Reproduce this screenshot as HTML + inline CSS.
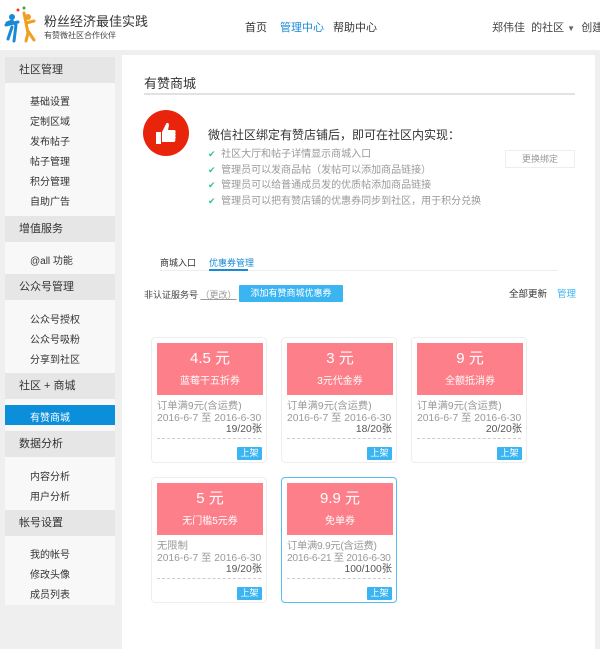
<!DOCTYPE html>
<html><head><meta charset="utf-8"><style>
*{margin:0;padding:0;box-sizing:border-box}
body{width:600px;height:649px;overflow:hidden;background:#efefef;font-family:"Liberation Sans","Noto Sans CJK SC",sans-serif;color:#333;position:relative}
.a{position:absolute;white-space:nowrap}
.hdr{position:absolute;left:0;top:0;width:600px;height:50px;background:#fff}
.side{position:absolute;left:5px;top:57px;width:110px;height:548px;background:#f8f8f8}
.sh{position:absolute;left:5px;width:110px;height:26px;background:#e6e6e6;font-size:11px;line-height:26px;padding-left:14px;color:#333}
.si{position:absolute;left:30px;font-size:10px;color:#333}
.main{position:absolute;left:122px;top:55px;width:473px;height:594px;background:#fff}
.card{position:absolute;width:116px;height:126px;border:1px solid #eee;border-radius:4px;background:#fff}
.card.sel{border:1.5px solid #5bbcf2}
.pk{position:absolute;left:5px;top:5px;width:106px;height:52px;background:#fd7f8a;color:#fff;text-align:center}
.pk b{display:block;font-weight:normal;font-size:15px;margin-top:7px;line-height:18px}
.pk i{display:block;font-style:normal;font-size:10px;margin-top:4px}
.ct{position:absolute;left:5px;font-size:10.3px;color:#999;line-height:12px;white-space:nowrap}
.cnt{position:absolute;right:4px;top:86px;font-size:10.3px;color:#555;line-height:12px;white-space:nowrap}
.dash{position:absolute;left:5px;right:5px;top:100px;border-top:1px dashed #ccc}
.up{position:absolute;right:4px;top:109px;width:25px;height:13px;background:#3bb4f2;color:#fff;font-size:9px;line-height:13px;text-align:center;border-radius:1px}
.chk{color:#2dc48a;font-size:9px}
</style></head><body>
<div class="hdr"></div>
<svg class="a" style="left:4px;top:5px" width="36" height="40" viewBox="0 0 36 40">
<circle cx="8" cy="12" r="3" fill="#1a8ad4"/><path d="M3 18 L8 16 L12 20 L10 36 M8 22 L4 34 M2 20 L14 17" stroke="#1a8ad4" stroke-width="3" fill="none" stroke-linecap="round"/>
<circle cx="24" cy="12" r="3" fill="#f0a020"/><path d="M20 8 L22 18 L24 28 L22 36 M24 26 L30 35 M22 18 L30 16" stroke="#f0a020" stroke-width="3" fill="none" stroke-linecap="round"/>
<circle cx="14" cy="5" r="1.5" fill="#e33"/><circle cx="20" cy="3" r="1.5" fill="#3a3"/>
</svg>
<div class="a" style="left:44px;top:11px;font-size:13px;color:#333">粉丝经济最佳实践</div>
<div class="a" style="left:44px;top:30px;font-size:8px;color:#444">有赞微社区合作伙伴</div>
<div class="a" style="left:245px;top:19px;font-size:11px;color:#333">首页</div>
<div class="a" style="left:280px;top:19px;font-size:11px;color:#1a8ad4">管理中心</div>
<div class="a" style="left:333px;top:19px;font-size:11px;color:#333">帮助中心</div>
<div class="a" style="left:492px;top:19px;font-size:11px;color:#444">郑伟佳 &nbsp;的社区 <span style="font-size:8px;color:#666">▼</span>&nbsp; 创建</div>

<div class="side"></div>
<div class="sh" style="top:57px">社区管理</div>
<div class="si" style="top:93px">基础设置</div><div class="si" style="top:113px">定制区域</div><div class="si" style="top:133px">发布帖子</div><div class="si" style="top:153px">帖子管理</div><div class="si" style="top:173px">积分管理</div><div class="si" style="top:193px">自助广告</div>
<div class="sh" style="top:216px">增值服务</div>
<div class="si" style="top:252px">@all 功能</div>
<div class="sh" style="top:274px">公众号管理</div>
<div class="si" style="top:311px">公众号授权</div><div class="si" style="top:331px">公众号吸粉</div><div class="si" style="top:351px">分享到社区</div>
<div class="sh" style="top:373px">社区 + 商城</div>
<div class="a" style="left:5px;top:405px;width:110px;height:20px;background:#0b8fdb"></div>
<div class="si" style="top:409px;color:#fff">有赞商城</div>
<div class="sh" style="top:431px">数据分析</div>
<div class="si" style="top:468px">内容分析</div><div class="si" style="top:488px">用户分析</div>
<div class="sh" style="top:510px">帐号设置</div>
<div class="si" style="top:546px">我的帐号</div><div class="si" style="top:566px">修改头像</div><div class="si" style="top:586px">成员列表</div>

<div class="main"></div>
<div class="a" style="left:144px;top:73px;font-size:13px;color:#333">有赞商城</div>
<div class="a" style="left:144px;top:93px;width:431px;height:2px;background:#e2e2e2"></div>
<svg class="a" style="left:143px;top:110px" width="46" height="46" viewBox="0 0 46 46"><circle cx="23" cy="23" r="23" fill="#e8250c"/><path d="M13 22 h5 v12 h-5z M19 22 l4 -8 c1 -2 3 -1 3 1 l-1 5 h6 c2 0 2 2 1 3 c1 1 1 2 0 3 c1 1 1 2 0 3 c1 1 0 3 -1 3 h-12z" fill="#fff"/></svg>
<div class="a" style="left:208px;top:126px;font-size:12px;color:#333">微信社区绑定有赞店铺后，即可在社区内实现：</div>
<div class="a" style="left:208px;top:147px;font-size:10px;color:#999;line-height:14.7px"><span class="chk">✔</span>&nbsp; 社区大厅和帖子详情显示商城入口<br><span class="chk">✔</span>&nbsp; 管理员可以发商品帖（发帖可以添加商品链接）<br><span class="chk">✔</span>&nbsp; 管理员可以给普通成员发的优质帖添加商品链接<br><span class="chk">✔</span>&nbsp; 管理员可以把有赞店铺的优惠券同步到社区，用于积分兑换</div>
<div class="a" style="left:505px;top:150px;width:70px;height:18px;border:1px solid #eee;font-size:9px;color:#999;text-align:center;line-height:16px">更换绑定</div>
<div class="a" style="left:160px;top:256px;font-size:9px;color:#333">商城入口</div>
<div class="a" style="left:209px;top:256px;font-size:9px;color:#1a8ad4">优惠券管理</div>
<div class="a" style="left:160px;top:270px;width:398px;height:1px;background:#eee"></div>
<div class="a" style="left:209px;top:269px;width:39px;height:2px;background:#1a8ad4"></div>
<div class="a" style="left:144px;top:288px;font-size:9px;color:#444">非认证服务号 <span style="color:#999;text-decoration:underline">（更改）</span></div>
<div class="a" style="left:239px;top:285px;width:104px;height:17px;background:#3bb4f2;color:#fff;font-size:9px;text-align:center;line-height:17px;border-radius:1px">添加有赞商城优惠券</div>
<div class="a" style="left:509px;top:286px;font-size:9.5px;color:#333">全部更新</div>
<div class="a" style="left:557px;top:286px;font-size:9.5px;color:#3bb4f2">管理</div>

<div class="card" style="left:151px;top:337px"><div class="pk"><b>4.5 元</b><i>蓝莓干五折券</i></div><div class="ct" style="top:63px">订单满9元(含运费)<br>2016-6-7 至 2016-6-30</div><div class="cnt">19/20张</div><div class="dash"></div><div class="up">上架</div></div>
<div class="card" style="left:281px;top:337px"><div class="pk"><b>3 元</b><i>3元代金券</i></div><div class="ct" style="top:63px">订单满9元(含运费)<br>2016-6-7 至 2016-6-30</div><div class="cnt">18/20张</div><div class="dash"></div><div class="up">上架</div></div>
<div class="card" style="left:411px;top:337px"><div class="pk"><b>9 元</b><i>全额抵消券</i></div><div class="ct" style="top:63px">订单满9元(含运费)<br>2016-6-7 至 2016-6-30</div><div class="cnt">20/20张</div><div class="dash"></div><div class="up">上架</div></div>
<div class="card" style="left:151px;top:477px"><div class="pk"><b>5 元</b><i>无门槛5元券</i></div><div class="ct" style="top:63px">无限制<br>2016-6-7 至 2016-6-30</div><div class="cnt">19/20张</div><div class="dash"></div><div class="up">上架</div></div>
<div class="card sel" style="left:281px;top:477px"><div class="pk"><b>9.9 元</b><i>免单券</i></div><div class="ct" style="top:63px;letter-spacing:-0.3px">订单满9.9元(含运费)<br>2016-6-21 至 2016-6-30</div><div class="cnt">100/100张</div><div class="dash"></div><div class="up">上架</div></div>
</body></html>
